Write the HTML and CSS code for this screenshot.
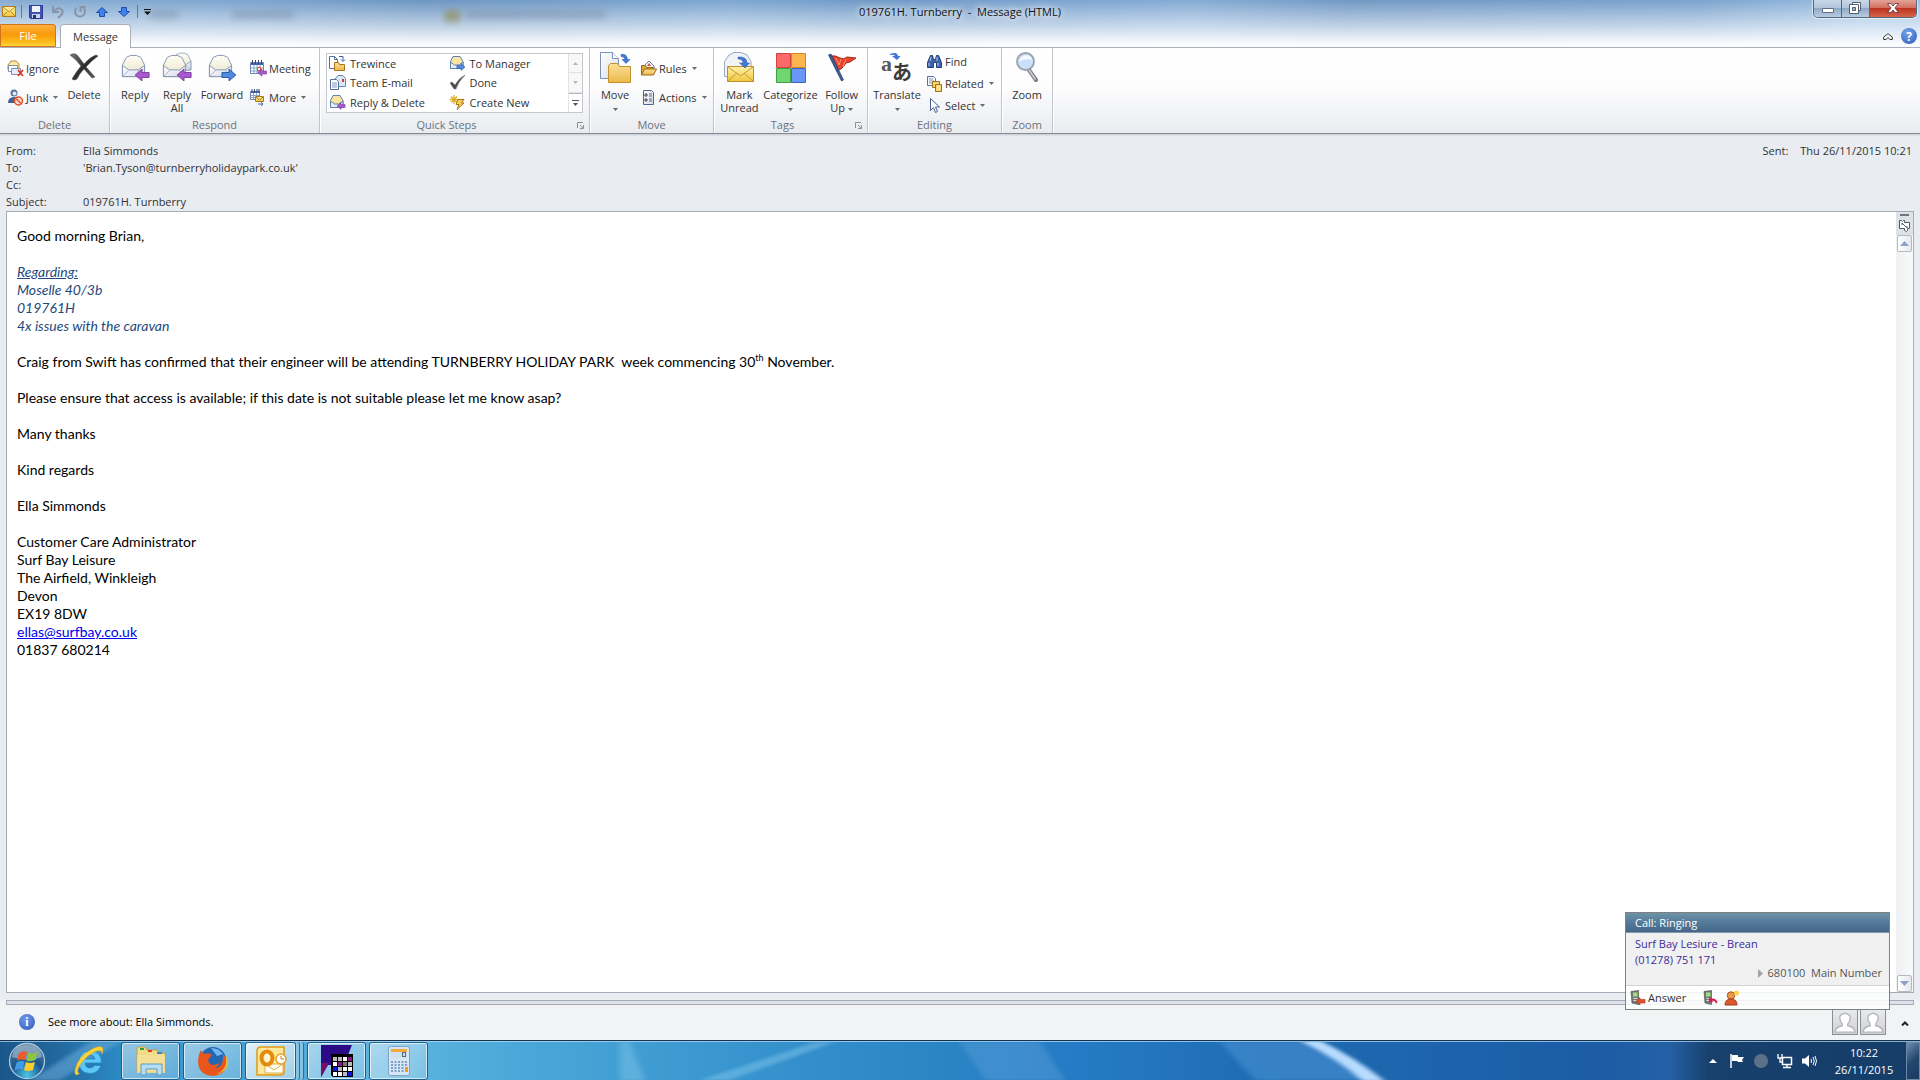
FILE: index.html
```html
<!DOCTYPE html>
<html lang="en">
<head>
    <meta charset="UTF-8">
    <meta name="viewport" content="width=device-width, initial-scale=1.0">
    <title>019761H. Turnberry - Message (HTML)</title>
    <link rel="stylesheet" href="styles.css">
</head>
<body>
    <!-- Shared icon shapes -->
    <svg class="defs" width="0" height="0" aria-hidden="true">
        <defs>
            <linearGradient id="gPaper" x1="0" y1="0" x2="1" y2="1"><stop offset="0" stop-color="#fff"/><stop offset="1" stop-color="#d5dce8"/></linearGradient>
            <linearGradient id="gCream" x1="0" y1="0" x2="0" y2="1"><stop offset="0" stop-color="#fffef5"/><stop offset="1" stop-color="#e9e3c8"/></linearGradient>
            <linearGradient id="gFolder" x1="0" y1="0" x2="0" y2="1"><stop offset="0" stop-color="#fde09a"/><stop offset="1" stop-color="#ebb94a"/></linearGradient>
            <linearGradient id="gYellow" x1="0" y1="0" x2="0" y2="1"><stop offset="0" stop-color="#fff2a8"/><stop offset="1" stop-color="#f0c63c"/></linearGradient>
            <linearGradient id="gInk" x1="0" y1="0" x2="1" y2="1"><stop offset="0" stop-color="#777"/><stop offset=".5" stop-color="#2c2c2c"/><stop offset="1" stop-color="#666"/></linearGradient>
            <symbol id="open-mail" viewBox="0 0 26 26">
                <path d="M1.500 11.500 5.500 3.500 10 1.500h6l4.500 2 4 8v12h-23z" fill="url(#gCream)" stroke="#8495b3"/>
                <path d="M1.500 12v11.500h23V12L18 16.500H8z" fill="url(#gPaper)" stroke="#8495b3"/>
                <path d="m2 23 6.500-6.500M24 23l-6.500-6.500" stroke="#aab6cb" fill="none"/>
            </symbol>
            <symbol id="arrow-left" viewBox="0 0 14 12"><path d="M1 6 7 .8v3h6.200v4.400H7v3z" fill="#a958ce" stroke="#7a3a9e" stroke-width=".8"/></symbol>
            <symbol id="arrow-right" viewBox="0 0 14 12"><path d="M13 6 7 .8v3H.8v4.400H7v3z" fill="#4f8ae0" stroke="#2456a8" stroke-width=".8"/></symbol>
            <symbol id="caret" viewBox="0 0 5 3"><path d="M0 0h5L2.500 3z" fill="#6b6b6b"/></symbol>
            <symbol id="launcher" viewBox="0 0 7 7"><path d="M.5 6V.5H6M3 3l3 3M6.500 3v3.500H3" fill="none" stroke="#8b919c"/></symbol>
            <symbol id="folder-move" viewBox="0 0 32 32">
                <path d="M1.500.5h12l6 6v20h-18z" fill="url(#gPaper)" stroke="#7c92b8"/>
                <path d="M13.500.5v6h6" fill="#fff" stroke="#7c92b8"/>
                <path d="M9.500 30.500v-17l2-2h7l2 3h11v16z" fill="url(#gFolder)" stroke="#c58f2f"/>
                <path d="M22 2.500q6-1 6.500 5H31l-4 4-4-4h2.500q0-3-3.500-3z" fill="#4377d4" stroke="#2a57b0" stroke-width=".5"/>
            </symbol>
            <symbol id="person" viewBox="0 0 26 26">
                <path d="M2 24q1-6 8-7v-2Q6 10 8 6q5-5 10 0 2 4-2 9v2q7 1 8 7z" fill="#fff" stroke="#b2b5ba" stroke-width="1.500"/>
            </symbol>
            <symbol id="handset" viewBox="0 0 16 16">
                <path d="M1 1.500 8.500.5v14L2 13z" fill="#777" stroke="#444" stroke-width=".6"/>
                <path d="M3 2.500h4.500v4H3z" fill="#9be07a"/><path d="M3.500 8.500h4M3.500 10.500h4" stroke="#ddd"/>
            </symbol>
        </defs>
    </svg>

    <div class="window">
        <!-- Title bar and tabs -->
        <header class="glass">
            <div class="ghosts" aria-hidden="true">
                <span class="ghost-tab ghost-a"></span><span class="ghost-tab ghost-b"></span><span class="ghost-icon"></span><span class="ghost-tab ghost-c"></span>
            </div>
            <div class="titlebar">
                <div class="quick-access">
                    <svg width="14" height="11" viewBox="0 0 14 11"><path d="M.5.5h13v10H.5z" fill="url(#gYellow)" stroke="#b07a1c"/><path d="m1 1 6 5 6-5M1 10l4-4m8 4L9 6" fill="none" stroke="#b98a2c"/></svg>
                    <i class="sep"></i>
                    <button aria-label="Save"><svg width="14" height="14" viewBox="0 0 14 14"><path d="M.5.5h13v13h-12l-1-1z" fill="#4551b5" stroke="#2f3a8c"/><path d="M3 1h8v6H3z" fill="#eef3fb"/><path d="M3 9h8v4H3z" fill="#c9d3ea"/><path d="M4 10h3v3H4z" fill="#28307a"/></svg></button>
                    <button aria-label="Undo"><svg width="14" height="14" viewBox="0 0 14 14"><path d="M2 1v6h6M3 6q5-5 8-1 2 4-4 8" fill="none" stroke="#8794a8" stroke-width="2"/></svg></button>
                    <button aria-label="Redo"><svg width="14" height="14" viewBox="0 0 14 14"><path d="M3.500 3a5 5 0 1 0 7 0M7.500 7V2h5" fill="none" stroke="#8794a8" stroke-width="2"/></svg></button>
                    <button aria-label="Previous"><svg width="12" height="10" viewBox="0 0 12 10"><path d="m6 .5 5.500 5H8.500v4h-5v-4h-3z" fill="#3f82ee" stroke="#1d4fae"/></svg></button>
                    <button aria-label="Next"><svg width="12" height="10" viewBox="0 0 12 10"><path d="m6 9.500 5.500-5H8.500v-4h-5v4h-3z" fill="#3f82ee" stroke="#1d4fae"/></svg></button>
                    <i class="sep"></i>
                    <button class="customise" aria-label="Customise"><svg width="7" height="6" viewBox="0 0 7 6"><path d="M0 0h7v1H0zM0 2.500h7L3.500 6z" fill="#111"/></svg></button>
                </div>
                <h1>019761H. Turnberry&nbsp; -&nbsp; Message (HTML)</h1>
                <div class="window-controls">
                    <button aria-label="Minimise"><svg width="12" height="5" viewBox="0 0 12 5"><path d="M.5.5h11v4H.5z" fill="#fff" stroke="#666f80"/></svg></button>
                    <button aria-label="Restore"><svg width="13" height="12" viewBox="0 0 13 12"><path d="M3.500.5h8v8h-8z" fill="#fff" stroke="#555e70"/><path d="M.5 2.500h9v9h-9z" fill="#fff" stroke="#555e70"/><path d="M3.500 5.500h3v3h-3z" fill="#9fb4cc" stroke="#555e70"/></svg></button>
                    <button class="close" aria-label="Close"><svg width="12" height="10" viewBox="0 0 12 10"><path d="M.5.500H4L6 3l2-2.500h3.500L8 5l3.500 4.500H8L6 7 4 9.500H.5L4 5z" fill="#fff" stroke="#5d3038" stroke-width=".8"/></svg></button>
                </div>
            </div>
            <nav class="tabs">
                <button class="tab file">File</button>
                <button class="tab current">Message</button>
                <div class="tab-tools">
                    <button aria-label="Minimise the ribbon"><svg width="10" height="8" viewBox="0 0 10 8"><path d="M.7 6.500V4L5 .700 9.300 4v2.500H6.800L5 4.500 3.200 6.500z" fill="#fff" stroke="#333"/></svg></button>
                    <button class="help" aria-label="Help">?</button>
                </div>
            </nav>
        </header>

        <!-- Ribbon -->
        <div class="ribbon">
            <section class="group g-delete">
                <div class="tools">
                    <div class="stack two">
                        <button class="small"><svg width="17" height="17" viewBox="0 0 17 17"><path d="m1 5 3-4h5l3 3v6H1z" fill="#fbe8a5" stroke="#b58a36"/><path d="M1.500 5.500h9v6h-9z" fill="#fff" stroke="#7f90ad"/><path d="M4.500 8.500h9v6h-9z" fill="#e7edf6" stroke="#7f90ad"/><path d="m11 10 5 6m0-6-5 6" stroke="#e2371f" stroke-width="1.800"/></svg>Ignore</button>
                        <button class="small"><svg width="17" height="17" viewBox="0 0 17 17"><circle cx="7" cy="4" r="3.500" fill="#56729f"/><circle cx="7.500" cy="4.500" r="2" fill="#e6e9ef"/><path d="M1 14q0-6 6-6t5 6z" fill="#445f91"/><circle cx="11.500" cy="12" r="4" fill="#f7d9cd" stroke="#e0522c" stroke-width="1.500"/><path d="m9 9.500 5 5" stroke="#e0522c" stroke-width="1.500"/></svg>Junk <svg class="caret"><use href="#caret"/></svg></button>
                    </div>
                    <button class="big"><svg width="32" height="32" viewBox="0 0 32 32"><path d="M2 3q5-3 8 1l6 8q6-7 12-9l2 1q-7 5-12 11l9 10-3 1-8-9q-5 5-7 10-3 2-5 0 4-7 9-13Q8 7 2 3z" fill="url(#gInk)" stroke="#555" stroke-width=".6"/></svg>Delete</button>
                </div>
                <h2>Delete</h2>
            </section>

            <section class="group g-respond">
                <div class="tools">
                    <button class="big"><svg width="32" height="32" viewBox="0 0 32 32"><use href="#open-mail" x="2" y="2" width="25" height="25"/><use href="#arrow-left" x="15" y="16" width="16" height="14"/></svg>Reply</button>
                    <button class="big"><svg width="32" height="32" viewBox="0 0 32 32"><use href="#open-mail" x="11" y="0" width="20" height="20"/><use href="#open-mail" x="1" y="2" width="25" height="25"/><use href="#arrow-left" x="15" y="16" width="16" height="14"/></svg>Reply<br>All</button>
                    <button class="big wide"><svg width="32" height="32" viewBox="0 0 32 32"><use href="#open-mail" x="2" y="2" width="25" height="25"/><use href="#arrow-right" x="15" y="16" width="16" height="14"/></svg>Forward</button>
                    <div class="stack two">
                        <button class="small"><svg width="17" height="17" viewBox="0 0 17 17"><path d="M.5 2.500h13v11H.5z" fill="#fff" stroke="#6f86b8"/><path d="M1 3h12v2H1z" fill="#4367bd"/><path d="M2.500 0v4m3-4v4m3-4v4m3-4v4" stroke="#38476e"/><path d="M1 8h12M1 11h12M4 5v8M7 5v8m3-8v8" stroke="#8da2cc"/><path d="M7.500 7.500h3v3h-3z" fill="#fff" stroke="#e04b25"/><use href="#arrow-left" x="7" y="8" width="10" height="9"/></svg>Meeting</button>
                        <button class="small"><svg width="17" height="17" viewBox="0 0 17 17"><path d="M.5 2.500h9v8h-9z" fill="#fff" stroke="#6f86b8"/><path d="M1 2h9v2H1z" fill="#4367bd"/><path d="M2 0v3m2.500-3v3M7 0v3m2-3v3" stroke="#38476e"/><path d="M1 6.500h8M1 8.500h8M3.500 4v6m3-6v6" stroke="#8da2cc"/><path d="M5.500 7.500h8v5h-8z" fill="url(#gYellow)" stroke="#a87a22"/><path d="m6 8 3.500 3L13 8" fill="none" stroke="#a87a22"/><path d="M8 15h5m-2-2 2 2-2 2" fill="none" stroke="#3b68c0"/></svg>More <svg class="caret"><use href="#caret"/></svg></button>
                    </div>
                </div>
                <h2>Respond</h2>
            </section>

            <section class="group has-launcher g-steps">
                <div class="gallery">
                    <div class="steps">
                        <button class="small"><svg width="17" height="17" viewBox="0 0 17 17"><path d="M.5 1.500h5l3 3v9h-8z" fill="#fff" stroke="#556e9c"/><path d="M5.500 1.500v3h3" fill="none" stroke="#556e9c"/><path d="M5.500 15.500v-8h4l1 2h5v6z" fill="url(#gFolder)" stroke="#a87420"/><path d="M10 1.500h4v4m-2-1 2 2 2-2" fill="none" stroke="#3a5fa8"/></svg>Trewince</button>
                        <button class="small"><svg width="17" height="17" viewBox="0 0 17 17"><path d="M1.500 6.500 4 1.500h7l3 5v7H1.500z" fill="#f8e6a0" stroke="#5f7fae"/><path d="M1.500 7v6.500H14V7l-4 3H5.500z" fill="#e6eefa" stroke="#5f7fae"/><use href="#arrow-right" x="7" y="8" width="10" height="8"/></svg>To Manager</button>
                        <button class="small"><svg width="17" height="17" viewBox="0 0 17 17"><path d="M5.500 5.500 9 1.500h5l2.500 3v8h-11z" fill="#dbe6f6" stroke="#6c86b2"/><path d="M1.500 5.500h6l2 2v8h-8z" fill="#fff" stroke="#556e9c"/><path d="M3 9h5m-5 2h5m-5 2h5" stroke="#7b93bd"/><path d="M13 5h2v3h-2z" fill="#d83c28"/></svg>Team E-mail</button>
                        <button class="small"><svg width="17" height="17" viewBox="0 0 17 17"><path d="m1 9 2-1 3 3q4-7 10-10Q9 8 7 15H5z" fill="#4a4a4a" stroke="#777" stroke-width=".6"/></svg>Done</button>
                        <button class="small"><svg width="17" height="17" viewBox="0 0 17 17"><path d="M1.500 6.500 4 1.500h7l3 5v7H1.500z" fill="#f8e6a0" stroke="#5f7fae"/><path d="M1.500 7v6.500H14V7l-4 3H5.500z" fill="#e6eefa" stroke="#5f7fae"/><use href="#arrow-left" x="7" y="8" width="10" height="8"/></svg>Reply &amp; Delete</button>
                        <button class="small"><svg width="17" height="17" viewBox="0 0 17 17"><path d="M5 1v9M.5 5.500h9M2 2.500l6 6m0-6-6 6" stroke="#e3b12b" stroke-width="1.300"/><path d="M9 5.500h6L12.500 9H15l-7 6.500 2-5H7z" fill="#f6cf55" stroke="#a97717"/></svg>Create New</button>
                    </div>
                    <div class="gallery-scroll">
                        <button disabled aria-label="Row up"><svg width="5" height="3"><path d="M0 3h5L2.500 0z" fill="#b4b6ba"/></svg></button>
                        <button disabled aria-label="Row down"><svg width="5" height="3"><path d="M0 0h5L2.500 3z" fill="#b4b6ba"/></svg></button>
                        <button aria-label="More steps"><svg width="7" height="6"><path d="M0 0h7v1H0zM1 3h5L3.500 6z" fill="#555"/></svg></button>
                    </div>
                </div>
                <h2>Quick Steps</h2>
                <svg class="launcher"><use href="#launcher"/></svg>
            </section>

            <section class="group g-move">
                <div class="tools">
                    <button class="big"><svg width="32" height="32" viewBox="0 0 32 32"><use href="#folder-move"/></svg>Move<br><svg class="caret"><use href="#caret"/></svg></button>
                    <div class="stack two">
                        <button class="small"><svg width="17" height="17" viewBox="0 0 17 17"><path d="m4 6 5-5 5 5v5H4z" fill="#f3f5fa" stroke="#667ba3"/><path d="M7 6 9 3l2 3z" fill="#d8502f"/><path d="M1.500 14.500v-9h4l1 2h7v7z" fill="#e2a93a" stroke="#9a6a14"/><path d="m1.500 15 3-6h12l-3 6z" fill="url(#gFolder)" stroke="#9a6a14"/></svg>Rules <svg class="caret"><use href="#caret"/></svg></button>
                        <button class="small"><svg width="17" height="17" viewBox="0 0 17 17"><path d="M3.500 1.500h8l2 2v12h-10z" fill="url(#gPaper)" stroke="#51678f"/><circle cx="6" cy="6" r="1.200" fill="none" stroke="#333"/><circle cx="6" cy="11" r="1.200" fill="none" stroke="#333"/><path d="M9 5h3M9 7h3m-3 3h3m-3 2h3" stroke="#4f6797"/></svg>Actions <svg class="caret"><use href="#caret"/></svg></button>
                    </div>
                </div>
                <h2>Move</h2>
            </section>

            <section class="group has-launcher g-tags">
                <div class="tools">
                    <button class="big"><svg width="32" height="32" viewBox="0 0 32 32"><path d="M1.500 24.500V9.500L6 3l5-2.500h7L24 3l4 6.500v15z" fill="#f1f3f5" stroke="#94a9c6"/><path d="M4.500 14.500h26v15h-26z" fill="url(#gYellow)" stroke="#c08e2c"/><path d="m5 15 12.500 9L30 15M5 29l9-8m16 8-9-8" fill="none" stroke="#c69a3a"/><path d="M15 5q9-1 9 6h2.500l-4.500 5-5.500-5H20q0-4-5-4z" fill="#4377d4" stroke="#2a57b0" stroke-width=".5"/></svg>Mark<br>Unread</button>
                    <button class="big categorize"><svg width="32" height="32" viewBox="0 0 32 32"><path d="M1.500 1.500h14v14h-14z" fill="#fb6a69" stroke="#d3423f"/><path d="M16.500 1.500h14v14h-14z" fill="#fbb64f" stroke="#cf8925"/><path d="M1.500 16.500h14v14h-14z" fill="#6fd56f" stroke="#3fa244"/><path d="M16.500 16.500h14v14h-14z" fill="#6a97f5" stroke="#3c65c6"/></svg>Categorize<br><svg class="caret"><use href="#caret"/></svg></button>
                    <button class="big"><svg width="32" height="32" viewBox="0 0 32 32"><path d="M4 4q6-1 10 2 4 2 7-1l9 1-6 4-4 1q-3 6-9 8z" fill="#e8452b" stroke="#a52a18"/><path d="m10 6 3 7 2-6m5 0-3 8" fill="none" stroke="#ff9176"/><path d="m2.500 3 13 26 2-1L5 2z" fill="#3d5b97" stroke="#27406f" stroke-width=".7"/></svg>Follow<br>Up <svg class="caret"><use href="#caret"/></svg></button>
                </div>
                <h2>Tags</h2>
                <svg class="launcher"><use href="#launcher"/></svg>
            </section>

            <section class="group g-editing">
                <div class="tools">
                    <button class="big translate"><svg width="32" height="32" viewBox="0 0 32 32"><text class="latin" x="0" y="19">a</text><text class="kana" x="11" y="28">あ</text><path d="M9 2q7-3 8 2h2.500L16 8l-5-4h3q-1-2-5-1z" fill="#3c73d8"/></svg>Translate<br><svg class="caret"><use href="#caret"/></svg></button>
                    <div class="stack three">
                        <button class="small"><svg width="17" height="17" viewBox="0 0 17 17"><path d="M1.500 14.500v-5l3-7h2l1 4h2l1-4h2l3 7v5h-5v-5h-3v5z" fill="#3d63ab" stroke="#253f78"/><path d="M3 10v3m9-3v3M5 4 4 8m7-4v4" stroke="#b9cdf2"/></svg>Find</button>
                        <button class="small"><svg width="17" height="17" viewBox="0 0 17 17"><path d="M1.500 1.500h6l2 2v7h-8z" fill="#fff" stroke="#5872a5"/><path d="M3 4h4M3 6h5M3 8h5" stroke="#7b93bd"/><path d="M6.500 6.500h7v6h-7z" fill="#f8d66f" stroke="#9c721a"/><path d="M9.500 9.500h6v7h-6z" fill="#f8d66f" stroke="#9c721a"/><path d="M11 12h3m-3 2h3" stroke="#fff4c9"/></svg>Related <svg class="caret"><use href="#caret"/></svg></button>
                        <button class="small"><svg width="17" height="17" viewBox="0 0 17 17"><path d="M4.500 1.500v12l3-3 2 5 2-1-2-4.500h4z" fill="#fff" stroke="#45608f"/></svg>Select <svg class="caret"><use href="#caret"/></svg></button>
                    </div>
                </div>
                <h2>Editing</h2>
            </section>

            <section class="group g-zoom">
                <div class="tools">
                    <button class="big"><svg width="32" height="32" viewBox="0 0 32 32"><path d="m18 18 7 10" stroke="#777b82" stroke-width="4" stroke-linecap="round"/><path d="m18 18 6.500 9.500" stroke="#c6c9ce" stroke-width="2"/><circle cx="14.500" cy="9.500" r="8.500" fill="#c9dffa" stroke="#9ba2ad" stroke-width="1.800"/><path d="M8 10q1-7 8-7 5 1 5 5-7-2-13 2z" fill="#f1f8ff"/></svg>Zoom</button>
                </div>
                <h2>Zoom</h2>
            </section>
        </div>

        <!-- Message header -->
        <div class="envelope">
            <dl>
                <dt>From:</dt><dd>Ella Simmonds</dd>
                <dt>To:</dt><dd>'Brian.Tyson@turnberryholidaypark.co.uk'</dd>
                <dt>Cc:</dt><dd></dd>
                <dt>Subject:</dt><dd>019761H. Turnberry</dd>
            </dl>
            <div class="sent"><span>Sent:</span><span>Thu 26/11/2015 10:21</span></div>
        </div>

        <!-- Message body -->
        <div class="reading">
            <article>
                <p>Good morning Brian,</p>
                <p class="regarding"><u>Regarding:</u><br>Moselle 40/3b<br>019761H<br>4x issues with the caravan</p>
                <p>Craig from Swift has confirmed that their engineer will be attending TURNBERRY HOLIDAY PARK&nbsp; week commencing 30<sup>th</sup> November.</p>
                <p>Please ensure that access is available; if this date is not suitable please let me know asap?</p>
                <p>Many thanks</p>
                <p>Kind regards</p>
                <p>Ella Simmonds</p>
                <p>Customer Care Administrator<br>Surf Bay Leisure<br>The Airfield, Winkleigh<br>Devon<br>EX19 8DW<br><a href="mailto:ellas@surfbay.co.uk">ellas@surfbay.co.uk</a><br>01837 680214</p>
            </article>
            <div class="scroll-col">
                <div class="scroll-top">
                    <i></i>
                    <svg width="13" height="13" viewBox="0 0 13 13"><path d="M1.500 1.500h2l1 1 1-1h1v2h5v6h-2v2l-1 1-2-1v-2h-5z" fill="#fff" stroke="#555b66"/><path d="m4 4 5 5M4 4v2m5 3V7" stroke="#555b66"/></svg>
                </div>
                <button aria-label="Scroll up"><svg width="9" height="5"><path d="M0 5h9L4.500 0z" fill="#8f9fc8"/></svg></button>
                <span class="track"></span>
                <button aria-label="Scroll down"><svg width="9" height="5"><path d="M0 0h9L4.500 5z" fill="#8f9fc8"/></svg></button>
            </div>
        </div>

        <!-- People pane -->
        <footer class="people">
            <div class="splitter"></div>
            <div class="people-row">
                <span class="info">i</span>
                <span>See more about: Ella Simmonds.</span>
                <div class="avatars">
                    <svg width="26" height="26"><use href="#person"/></svg>
                    <svg width="26" height="26"><use href="#person"/></svg>
                </div>
                <button class="expand" aria-label="Expand people pane"><svg width="8" height="5" viewBox="0 0 8 5"><path d="m1 4.500 3-3 3 3" fill="none" stroke="#222" stroke-width="2"/></svg></button>
            </div>
        </footer>

        <!-- Incoming call toast -->
        <aside class="call">
            <h3>Call: Ringing</h3>
            <div class="caller">
                <div>Surf Bay Lesiure - Brean</div>
                <div>(01278) 751 171</div>
                <div class="line"><svg width="5" height="9"><path d="M0 0v9l5-4.500z" fill="#a3a3a3"/></svg>680100&nbsp; Main Number</div>
            </div>
            <div class="call-actions">
                <button class="answer"><svg width="16" height="16" viewBox="0 0 16 16"><use href="#handset" width="16" height="16"/><path d="m6 11 4-3.500v2h5v3.500h-5v2z" fill="#e2512e" stroke="#a93317" stroke-width=".6"/></svg>Answer</button>
                <button aria-label="Reject"><svg width="16" height="16" viewBox="0 0 16 16"><use href="#handset" width="16" height="16"/><path d="M6 7v5h4.500L9 10.500q3 0 4 3l1.500-1Q13 8 9 8.500z" fill="#d81f45"/></svg></button>
                <button aria-label="Transfer"><svg width="16" height="16" viewBox="0 0 16 16"><circle cx="7" cy="5.500" r="3.700" fill="#e99a4a" stroke="#a7541e"/><path d="M1 15q0-6 6-6t6 6z" fill="#d8572c" stroke="#a43a17"/><circle cx="12.500" cy="3" r="2.500" fill="#ffd34d"/></svg></button>
            </div>
        </aside>
    </div>

    <!-- Taskbar -->
    <div class="taskbar">
        <svg class="wallpaper" viewBox="0 0 1920 40" preserveAspectRatio="none" aria-hidden="true">
            <defs><filter id="soft" x="-20%" y="-50%" width="140%" height="200%"><feGaussianBlur stdDeviation="3 1"/></filter></defs>
            <g filter="url(#soft)">
                <path d="M30 40 90 0h30L60 40z" fill="#6fb2dd" opacity=".5"/>
                <path d="M620 0h10l15 40h-25z" fill="#8bcdea" opacity=".4"/>
                <path d="M835 0h-20L700 40h30z" fill="#8fd0f0" opacity=".4"/>
                <path d="M960 0h80l25 40h-80z" fill="#5fa3dc" opacity=".4"/>
                <path d="M1220 0h90l60 40h-115z" fill="#4f97d8" opacity=".5"/>
                <path d="M1301 -1h20q32 16 64 42h-22q-26-24-62-42z" fill="#b7dcff"/>
            </g>
        </svg>
        <button class="orb" aria-label="Start"><svg width="38" height="38" viewBox="0 0 38 38">
            <defs><radialGradient id="gOrb" cx=".5" cy=".9" r=".9"><stop offset="0" stop-color="#49c6e8"/><stop offset=".5" stop-color="#1a568a"/><stop offset="1" stop-color="#5b7f9c"/></radialGradient></defs>
            <circle cx="19" cy="19" r="17.500" fill="url(#gOrb)" stroke="#a9c8dc" stroke-width="1.300"/><path d="M4 15Q6 3 19 3t15 12q-14 6-30 0z" fill="#cfe0ec" opacity=".45"/>
            <path d="M11 11q4-3 8-1l-2 8q-4-2-8 1z" fill="#f0592a"/><path d="M20.500 10.500q4 2 9-.5l-2 8q-5 2-9 .5z" fill="#8cc63e"/><path d="M8.500 20.500q4-3 8-1l-2 8q-4-2-8 1z" fill="#3f9be8"/><path d="M18 20q4 2 9 0l-2 8q-5 2-9 0z" fill="#fccb2f"/></svg></button>
        <button class="pinned" aria-label="Internet Explorer"><svg width="32" height="32" viewBox="0 0 32 32"><path d="M28.500 18H12q.5 5 5 5 3 0 4.500-2.500h6.500Q25 28.500 17 28.500 6 28 6 17 6.500 6 17 6q11.500 0 11.500 12zM12.300 14H22q-.7-4-5-4t-4.700 4z" fill="#5ec8f5" stroke="#2285c8" stroke-width=".8"/><path d="M7 28Q1 33 2 25 5 11 19 4q10-5 11 0 0 3-1 5 0-6-8-2Q9 14 5 24q-1 5 2 4z" fill="#fcd335" stroke="#d79a14" stroke-width=".5"/></svg></button>
        <div class="apps">
            <button class="app" aria-label="Explorer"><svg width="32" height="32" viewBox="0 0 32 32"><path d="M2 27V3q0-1 1-1h7l2 3h10l2 3h6v19z" fill="#f3dc88" stroke="#c59f41"/><path d="M5 3h4v2H5zM13 5h4v2h-4z" fill="#25a03a"/><path d="M13 5h3v2h-3z" fill="#d83b22"/><path d="M22 7h5v2h-5z" fill="#3a7fd6"/><path d="M2 10h28v18H2z" fill="#f5e19b" opacity=".8"/><path d="M6 30V19h21v11h-5v-6H11v6z" fill="#b4def3" stroke="#5a9bc1"/></svg></button>
            <button class="app" aria-label="Firefox"><svg width="32" height="32" viewBox="0 0 32 32"><circle cx="16" cy="15" r="13" fill="#2467b5"/><path d="M14 3q8 0 12 6l-6 2z" fill="#71b7ec"/><path d="M4 5q1 3 4 4 4-2 7 1l-4 5q1 5 6 5 3-1 5-2 0 4-5 5 10 0 9-14 4 5 4 9-1 12-14 13Q1 30 1 16q0-6 3-11z" fill="#e8561d"/><path d="M28 8q5 18-12 22 15-2 15-14z" fill="#fbb62b"/></svg></button>
            <div class="stacked">
                <button class="app active" aria-label="Outlook"><svg width="32" height="32" viewBox="0 0 32 32"><path d="M2 6q0-4 4-4h23v25q0 3-4 3H2z" fill="#fce79a" stroke="#e29a16" stroke-width="1.500"/><path d="M10 19h18v9H10z" fill="#fffdf1" stroke="#d8b24c"/><path d="m10 19 9 6 9-6" fill="none" stroke="#d8b24c"/><ellipse cx="12" cy="13" rx="5.500" ry="6.500" fill="#fff6cf" stroke="#e58a0c" stroke-width="4"/><circle cx="26" cy="14" r="5" fill="#fff" stroke="#e8a028" stroke-width="1.500"/><path d="M26 11v3h3" fill="none" stroke="#c77f14"/></svg></button>
                <i></i><i></i>
            </div>
            <button class="app" aria-label="Switchboard"><svg width="32" height="32" viewBox="0 0 32 32"><path d="M0 0h31l-8 20H7L0 32z" fill="#2d0a86"/><path d="M0 18h8L0 32z" fill="#7a0f6a"/><path d="M10 9h22v23H12l-2-2z" fill="#000"/><path d="M12 12h4v4h-4zM17 12h4v4h-4zM17 22h4v4h-4zM27 17h4v4h-4zM22 27h4v4h-4z" fill="#bdbdbd"/><path d="M22 12h4v4h-4zM12 17h4v4h-4zM22 22h4v4h-4zM27 22h4v4h-4zM12 27h4v4h-4zM17 27h4v4h-4z" fill="#fff"/><path d="M17 17h4v4h-4zM27 12h4v4h-4z" fill="#8b1a86"/><path d="M12 22h4v4h-4zM27 27h4v4h-4z" fill="#1414e0"/><path d="M22 17h4v4h-4z" fill="#777"/></svg></button>
            <button class="app" aria-label="Calculator"><svg width="32" height="32" viewBox="0 0 32 32"><rect x="5.500" y="1.500" width="21" height="29" rx="2" fill="#d5e6f5" stroke="#7fa3c8"/><path d="M8 4h16v3H8z" fill="#f5a93a"/><path d="M8 7h16v6H8z" fill="#cfe0ee"/><rect x="19.500" y="7.500" width="3" height="4" fill="none" stroke="#58687c"/><path d="M8 17h16M8 20h16M8 23h16M8 26h16" stroke="#7e9fc6" stroke-width="2" stroke-dasharray="2 1.500"/><path d="M22 22h3v5h-3z" fill="#f19a2b"/></svg></button>
        </div>
        <div class="tray">
            <svg width="16" height="16" viewBox="0 0 16 16"><path d="M4 10h8L8 6z" fill="#fff"/></svg>
            <svg width="16" height="16" viewBox="0 0 16 16"><path d="M2 1v14" stroke="#fff" stroke-width="1.500"/><path d="M3 2h6v2h6l-2 3 1 2H9L8 8H3z" fill="#fff"/></svg>
            <svg width="16" height="16" viewBox="0 0 16 16"><circle cx="8" cy="8" r="7" fill="#5c7188"/></svg>
            <svg width="16" height="16" viewBox="0 0 16 16"><path d="M5.500 4.500h9v7h-9zM10 12v2m-4 .5h8" fill="none" stroke="#fff" stroke-width="1.500"/><path d="M1 1v4h4V1M3 5v4h3" fill="none" stroke="#fff" stroke-width="1.300"/></svg>
            <svg width="16" height="16" viewBox="0 0 16 16"><path d="M1 5.500h3L8 2v12l-4-3.500H1z" fill="#fff"/><path d="M10 6q1 2 0 4m2-6q2.500 4 0 8m2-9q3 5 0 10" fill="none" stroke="#fff"/></svg>
            <div class="clock">10:22<br>26/11/2015</div>
        </div>
        <button class="show-desktop" aria-label="Show desktop"></button>
    </div>
</body>
</html>
```

FILE: styles.css
```css
* {
    box-sizing: border-box;
}
body {
    margin: 0;
    min-height: 100vh;
    display: flex;
    flex-direction: column;
    background: #e9ecf1;
    font-family: "Open Sans", "Noto Sans", sans-serif;
    font-size: 11px;
    line-height: 13px;
    color: #333;
}
h1, h2, h3, p, dl, dd {
    margin: 0;
    font-weight: normal;
}
button {
    margin: 0;
    padding: 0;
    border: 0;
    background: none;
    font: inherit;
    color: inherit;
}
svg {
    flex: none;
}
.defs {
    position: absolute;
}
.window {
    flex: 1;
    display: flex;
    flex-direction: column;
    position: relative;
}

/* glass title area */
.glass {
    position: relative;
    height: 48px;
    background:
        linear-gradient(to bottom, rgba(255,255,255,0) 0, rgba(255,255,255,0.55) 55%, #fcfdff 95%),
        linear-gradient(100deg, #86acd3 0, #7da5cf 12%, #6d96c3 22%, #7da6d1 38%, #6f99c7 45%, #85abd5 62%, #7299c3 70%, #7ba2cd 88%, #9cc0e4 97%);
    border-bottom: 1px solid #abaeb6;
}
/* windows behind the glass */
.ghosts {
    position: absolute;
    left: 150px;
    top: 10px;
    display: flex;
    filter: blur(3px);
    opacity: 0.5;
}
.ghost-tab {
    height: 9px;
    background: #6f8299;
    opacity: 0.7;
}
.ghost-a { width: 28px; }
.ghost-b { width: 62px; margin-left: 54px; }
.ghost-c { width: 140px; margin-left: 6px; }
.ghost-icon {
    width: 15px;
    height: 12px;
    margin-left: 151px;
    background: #8a7d28;
}
.titlebar {
    position: relative;
    display: grid;
    grid-template-columns: 1fr auto 1fr;
    height: 24px;
}
.titlebar h1 {
    font-size: 11px;
    line-height: 24px;
    color: #111;
    text-shadow: 0 0 6px #fff, 0 0 10px #fff;
}
.quick-access {
    display: flex;
    align-items: center;
    gap: 5px;
    padding-left: 2px;
    height: 23px;
}
.quick-access button {
    width: 17px;
    height: 17px;
    display: flex;
    align-items: center;
    justify-content: center;
}
.quick-access .customise {
    width: 8px;
}
.sep {
    width: 1px;
    height: 13px;
    background: #66788f;
}
.window-controls {
    justify-self: end;
    display: flex;
    height: 18px;
    margin-right: 3px;
    border: 1px solid #56687f;
    border-top: 0;
    border-radius: 0 0 5px 5px;
    overflow: hidden;
    box-shadow: 0 0 1px 1px rgba(255,255,255,0.6);
}
.window-controls button {
    width: 28px;
    background: linear-gradient(#c8d7e8 0, #b2c5db 45%, #8fa9c6 50%, #b9cde2 100%);
    border-right: 1px solid #56687f;
}
.window-controls .close {
    width: 46px;
    border-right: 0;
    background: linear-gradient(#e3a498 0, #d4705f 45%, #bb3521 50%, #d5654a 100%);
}
.tabs {
    position: relative;
    display: flex;
    height: 24px;
}
.tab {
    height: 24px;
}
.tab.file {
    width: 56px;
    height: 23px;
    margin-right: 4px;
    color: #fff;
    border: 1px solid #d0731a;
    border-radius: 0 3px 0 0;
    background: linear-gradient(#fbb03c 0, #f99a0c 45%, #fdb515 75%, #ffd23a 100%);
}
.tab.current {
    width: 71px;
    border: 1px solid #abaeb6;
    border-bottom: 0;
    border-radius: 4px 4px 0 0;
    background: #fff;
}
.tab-tools {
    margin-left: auto;
    padding-right: 3px;
    display: flex;
    align-items: center;
    gap: 8px;
}
.help {
    width: 16px;
    height: 16px;
    border-radius: 50%;
    background: radial-gradient(circle at 40% 30%, #75a1e8, #2b5fbb);
    color: #fff;
    font-size: 12px;
    font-weight: bold;
}

/* ribbon */
.ribbon {
    display: flex;
    height: 86px;
    background: linear-gradient(#fff 0, #fdfdfe 45%, #e9ebef 100%);
    border-bottom: 1px solid #868b93;
    box-shadow: 0 1px 2px #c3c7ce;
}
.group {
    position: relative;
    display: flex;
    flex-direction: column;
    padding: 2px 4px 0;
    border-right: 1px solid #c1c4ca;
    box-shadow: 1px 0 0 #fff;
}
.group h2 {
    margin-top: auto;
    font-size: 11px;
    line-height: 17px;
    color: #6a7280;
    text-align: center;
}
.has-launcher h2 {
    padding-right: 16px;
}
.g-delete { width: 110px; }
.g-respond { width: 210px; }
.g-steps { width: 270px; }
.g-move { width: 124px; }
.g-tags { width: 154px; }
.g-editing { width: 134px; }
.g-zoom { width: 51px; }
.tools {
    display: flex;
    align-items: flex-start;
}
.big {
    width: 42px;
    padding-top: 2px;
    text-align: center;
    white-space: nowrap;
}
.big > svg:first-child {
    display: block;
    margin: 0 auto 4px;
}
.big.wide { width: 48px; }
.big.categorize { width: 60px; }
.big.translate { width: 50px; }
.g-tags .big:not(.categorize) { width: 43px; }
.caret {
    width: 5px;
    height: 3px;
    margin-left: 3px;
    vertical-align: middle;
}
.big br + .caret {
    margin-left: 0;
}
.stack {
    display: flex;
    flex-direction: column;
    padding-left: 4px;
}
.small {
    display: flex;
    align-items: center;
    gap: 2px;
    white-space: nowrap;
    text-align: left;
}
.two {
    padding-top: 4px;
}
.two .small {
    height: 29px;
}
.three .small {
    height: 22px;
}
.g-delete .stack {
    width: 59px;
    padding-left: 3px;
}
.gallery {
    display: flex;
    height: 60px;
    margin: 3px 2px 0;
    border: 1px solid #c3c8d0;
    background: #fff;
}
.steps {
    flex: 1;
    display: grid;
    grid-template-columns: 1fr 1fr;
    grid-template-rows: repeat(3, 1fr);
    padding-left: 2px;
}
.steps .small {
    gap: 4px;
}
.gallery-scroll {
    width: 14px;
    display: grid;
    grid-template-rows: 1fr 1fr 1fr;
    border-left: 1px solid #dfe2e6;
}
.gallery-scroll button {
    display: flex;
    align-items: center;
    justify-content: center;
    background: #f8f8f9;
    border-bottom: 1px solid #dfe2e6;
}
.gallery-scroll button:last-child {
    background: #fff;
    border-bottom: 0;
    border-top: 1px solid #b5bac2;
}
.launcher {
    position: absolute;
    right: 5px;
    bottom: 4px;
    width: 7px;
    height: 7px;
}
.latin {
    font: bold 22px "Liberation Serif", serif;
    fill: #5b5b5b;
}
.kana {
    font: bold 20px "Noto Sans CJK JP", sans-serif;
    fill: #3c3c3c;
}

/* message header */
.envelope {
    display: flex;
    justify-content: space-between;
    padding: 8px 8px 1px 6px;
    line-height: 17px;
}
.envelope dl {
    display: grid;
    grid-template-columns: 77px auto;
    grid-auto-rows: 17px;
}
.sent {
    display: flex;
    gap: 12px;
}

/* message body */
.reading {
    flex: 1;
    display: flex;
    margin: 0 6px;
    border: 1px solid #a5acb9;
    background: #fff;
}
article {
    flex: 1;
    padding: 15px 10px;
    font-family: Lato, "Open Sans", sans-serif;
    font-size: 14px;
    line-height: 18px;
    color: #000;
}
article p {
    margin-bottom: 18px;
}
article a {
    color: #0000ee;
}
article sup {
    font-size: 9px;
    line-height: 0;
}
.regarding {
    color: #1f497d;
    font-style: italic;
}
.scroll-col {
    width: 17px;
    display: flex;
    flex-direction: column;
    align-items: center;
    background: linear-gradient(to right, #eef0f3, #fafafa);
}
.scroll-top {
    width: 17px;
    height: 23px;
    display: flex;
    flex-direction: column;
    align-items: center;
    gap: 3px;
    padding-top: 2px;
    background: #dde2e9;
}
.scroll-top i {
    width: 9px;
    height: 2px;
    background: #70757d;
}
.track {
    flex: 1;
}
.scroll-col button {
    width: 15px;
    height: 17px;
    display: flex;
    align-items: center;
    justify-content: center;
    border: 1px solid #b4b8bf;
    border-radius: 2px;
    background: linear-gradient(to right, #fff, #e6e8ec);
}

/* people pane */
.people {
    margin-top: 7px;
    background: #f2f3f5;
}
.splitter {
    height: 5px;
    margin: 0 6px;
    border: 1px solid #a5acb9;
    background: #dfe2e8;
}
.people-row {
    display: flex;
    align-items: center;
    height: 35px;
    padding: 0 11px 2px 19px;
    color: #000;
}
.info {
    width: 16px;
    height: 16px;
    margin-right: 13px;
    border-radius: 50%;
    background: radial-gradient(circle at 40% 30%, #6f97e6, #2f59ba);
    color: #fff;
    font: bold 12px/16px "Liberation Serif", serif;
    text-align: center;
}
.avatars {
    margin-left: auto;
    display: flex;
    gap: 2px;
}
.avatars svg {
    border: 1px solid #8b8e93;
    background: linear-gradient(#e9eaec, #cfd1d5);
}
.expand {
    margin-left: 15px;
}

/* call toast */
.call {
    position: absolute;
    right: 30px;
    bottom: 30px;
    width: 265px;
    border: 1px solid #808080;
    background: rgba(255,255,255,0.86);
}
.call h3 {
    padding-left: 9px;
    font-size: 11px;
    line-height: 19px;
    color: #fff;
    background: linear-gradient(#6e93a6 0, #567c9c 45%, #466688 100%);
    border-bottom: 1px solid #7f98ad;
}
.caller {
    height: 53px;
    padding: 3px 7px 0 9px;
    line-height: 16px;
    color: #3a2c9b;
    background: #f0f0f0;
    border-bottom: 1px solid #d2d2d2;
}
.caller .line {
    display: flex;
    align-items: center;
    justify-content: flex-end;
    gap: 5px;
    line-height: 10px;
    color: #555;
}
.call-actions {
    display: flex;
    align-items: center;
    gap: 5px;
    height: 23px;
    padding-left: 4px;
}
.call-actions button {
    display: flex;
    align-items: center;
}
.answer {
    gap: 2px;
    margin-right: 12px;
}

/* taskbar */
.taskbar {
    position: relative;
    display: flex;
    align-items: center;
    height: 40px;
    border-top: 1px solid #15324f;
    box-shadow: inset 0 1px 0 rgba(190,225,250,0.7);
    background: linear-gradient(to right, #1a5689 0, #22689f 3%, #2f92cc 7%, #5fb5e0 20%, #4aa8d8 27%, #3a97d0 37%, #2b86c4 48%, #257bc5 56%, #1f6cb3 66%, #1b5ca5 83%, #2460a4 87%, #18406d 89%, #153d68 100%);
}
.wallpaper {
    position: absolute;
    left: 0;
    top: 1px;
    width: 100%;
    height: 38px;
}
.taskbar > button,
.apps,
.tray {
    position: relative;
}
.orb {
    margin-left: 8px;
    height: 38px;
}
.pinned {
    margin-left: 27px;
    height: 32px;
}
.apps {
    display: flex;
    gap: 3px;
    margin-left: 16px;
}
.app {
    width: 59px;
    height: 38px;
    display: flex;
    align-items: center;
    justify-content: center;
    border: 1px solid #1d5f8c;
    border-radius: 3px;
    box-shadow: inset 0 0 0 1px rgba(255,255,255,0.65);
    background: linear-gradient(135deg, rgba(255,255,255,0.5), rgba(255,255,255,0.2));
}
.app.active {
    width: 51px;
    background: linear-gradient(135deg, rgba(255,255,255,0.85), rgba(255,255,255,0.45));
}
.stacked {
    display: flex;
    width: 59px;
}
.stacked i {
    width: 4px;
    height: 38px;
    border-right: 1px solid #2d6f9b;
    background: rgba(255,255,255,0.3);
    border-radius: 0 3px 3px 0;
}
.tray {
    display: flex;
    align-items: center;
    gap: 8px;
    margin-left: auto;
}
.clock {
    width: 70px;
    padding-left: 8px;
    line-height: 17px;
    color: #fff;
    text-align: center;
}
.show-desktop {
    width: 14px;
    height: 38px;
    margin-left: 11px;
    border: 1px solid #6d89a6;
    background: linear-gradient(135deg, #6f8db0, #24476f 50%, #163a62);
}
```
